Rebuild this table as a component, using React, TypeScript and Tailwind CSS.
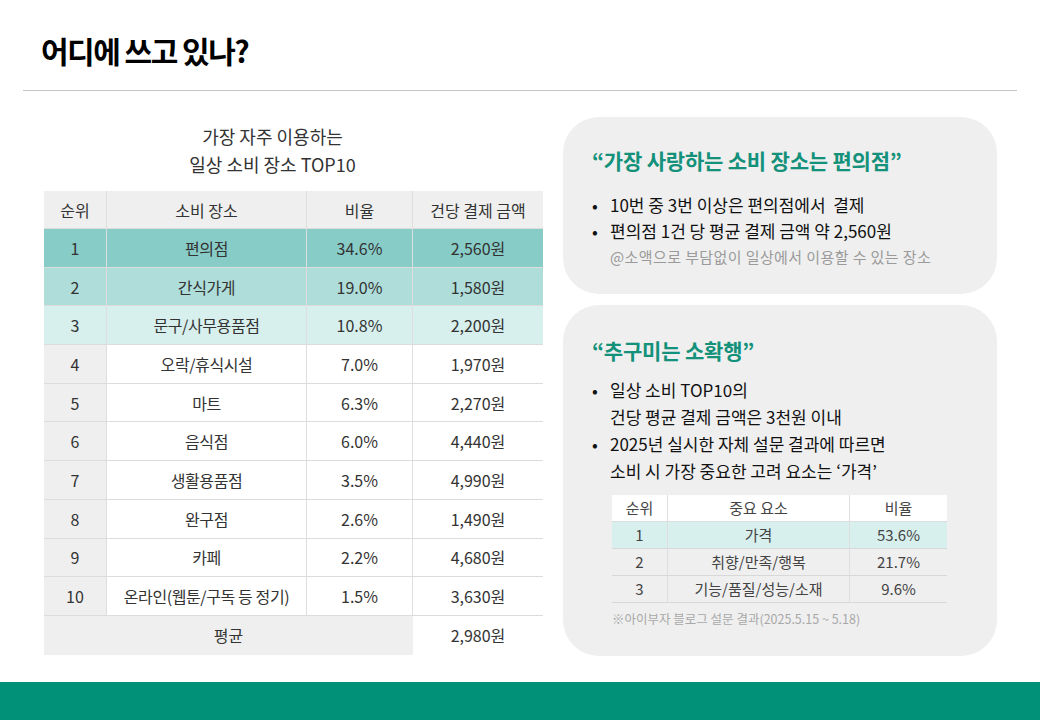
import React from "react";

const font = { fontFamily: '"Noto Sans CJK KR", "Noto Sans", sans-serif' };

const rows = [
  { rank: "1", place: "편의점", ratio: "34.6%", amount: "2,560원", bg: "bg-[#88ccc8]" },
  { rank: "2", place: "간식가게", ratio: "19.0%", amount: "1,580원", bg: "bg-[#aeddda]" },
  { rank: "3", place: "문구/사무용품점", ratio: "10.8%", amount: "2,200원", bg: "bg-[#d7efed]" },
  { rank: "4", place: "오락/휴식시설", ratio: "7.0%", amount: "1,970원" },
  { rank: "5", place: "마트", ratio: "6.3%", amount: "2,270원" },
  { rank: "6", place: "음식점", ratio: "6.0%", amount: "4,440원" },
  { rank: "7", place: "생활용품점", ratio: "3.5%", amount: "4,990원" },
  { rank: "8", place: "완구점", ratio: "2.6%", amount: "1,490원" },
  { rank: "9", place: "카페", ratio: "2.2%", amount: "4,680원" },
  { rank: "10", place: "온라인(웹툰/구독 등 정기)", ratio: "1.5%", amount: "3,630원" },
];

const factors = [
  { rank: "1", name: "가격", ratio: "53.6%", bg: "bg-[#d7efed]" },
  { rank: "2", name: "취향/만족/행복", ratio: "21.7%", bg: "" },
  { rank: "3", name: "기능/품질/성능/소재", ratio: "9.6%", bg: "" },
];

function TopTable() {
  const cols = "grid grid-cols-[63px_200px_106px_130px]";
  const cell = "flex items-center justify-center border-r border-[#dedede] last:border-r-0";
  return (
    <div className="w-[499px] text-[16px] text-[#333]">
      <div className={`${cols} h-[38px] bg-[#efefef] border-b border-[#dcdcdc]`}>
        <div className={cell}>순위</div>
        <div className={cell}>소비 장소</div>
        <div className={cell}>비율</div>
        <div className={cell}>건당 결제 금액</div>
      </div>
      {rows.map((r) => (
        <div key={r.rank} className={`${cols} h-[38.7px] border-b border-[#dcdcdc] ${r.bg ?? "bg-white"}`}>
          <div className={`${cell} ${r.bg ? "" : "bg-[#efefef]"}`}>{r.rank}</div>
          <div className={`${cell} whitespace-nowrap tracking-[-0.4px]`}>{r.place}</div>
          <div className={cell}>{r.ratio}</div>
          <div className={cell}>{r.amount}</div>
        </div>
      ))}
      <div className={`${cols} h-[39px]`}>
        <div className="col-span-3 flex items-center justify-center bg-[#efefef]">평균</div>
        <div className="flex items-center justify-center bg-white">2,980원</div>
      </div>
    </div>
  );
}

function Bullet({ children }: { children: React.ReactNode }) {
  return (
    <div className="flex">
      <span className="w-[18px] shrink-0">•</span>
      <div>{children}</div>
    </div>
  );
}

function FactorTable() {
  const cols = "grid grid-cols-[56px_182px_97px]";
  const cell = "flex items-center justify-center border-r border-[#dedede] last:border-r-0";
  return (
    <div className="w-[335px] text-[15px] text-[#444]">
      <div className={`${cols} h-[27px] bg-white border-b border-[#dcdcdc]`}>
        <div className={cell}>순위</div>
        <div className={cell}>중요 요소</div>
        <div className={cell}>비율</div>
      </div>
      {factors.map((f) => (
        <div key={f.rank} className={`${cols} h-[27px] border-b border-[#d8d8d8] ${f.bg}`}>
          <div className={cell}>{f.rank}</div>
          <div className={cell}>{f.name}</div>
          <div className={cell}>{f.ratio}</div>
        </div>
      ))}
    </div>
  );
}

export default function App() {
  return (
    <div className="w-[1040px] h-[720px] bg-white flex flex-col overflow-hidden" style={font}>
      <div className="px-[23px]">
        <h1 className="pl-[18px] pt-[27px] h-[90px] text-[30px] font-bold tracking-[-1.5px] text-black leading-[46px]">
          어디에 쓰고 있나?
        </h1>
        <div className="h-px bg-[#c4c4c4]" />
      </div>

      <div className="flex flex-1 pl-[44px] pt-[26px]">
        <div className="flex flex-col">
          <div className="pt-[5px] pr-[42px] text-center text-[18px] leading-[28px] text-[#333] h-[74px]">
            <div>가장 자주 이용하는</div>
            <div>일상 소비 장소 TOP10</div>
          </div>
          <TopTable />
        </div>

        <div className="ml-[20px] flex flex-col gap-[11px] w-[434px]">
          <div className="h-[177px] rounded-[36px] bg-[#efefef] px-[29px] pt-[28px] text-[17px] text-[#111]">
            <div className="text-[21px] font-bold text-[#13917a] tracking-[-0.2px] leading-[30px]">
              “가장 사랑하는 소비 장소는 편의점”
            </div>
            <div className="mt-[17px] leading-[26px]">
              <Bullet>10번 중 3번 이상은 편의점에서&nbsp; 결제</Bullet>
              <Bullet>편의점 1건 당 평균 결제 금액 약 2,560원</Bullet>
              <div className="pl-[18px] text-[15px] tracking-[0.4px] text-[#9a9a9a] leading-[26px]">
                @소액으로 부담없이 일상에서 이용할 수 있는 장소
              </div>
            </div>
          </div>

          <div className="h-[351px] rounded-[36px] bg-[#efefef] px-[29px] pt-[30px] text-[17px] text-[#111]">
            <div className="text-[21px] font-bold text-[#13917a] tracking-[-0.2px] leading-[30px]">
              “추구미는 소확행”
            </div>
            <div className="mt-[11px] leading-[27px]">
              <Bullet>
                일상 소비 TOP10의
                <br />
                건당 평균 결제 금액은 3천원 이내
              </Bullet>
              <Bullet>
                2025년 실시한 자체 설문 결과에 따르면
                <br />
                소비 시 가장 중요한 고려 요소는 ‘가격’
              </Bullet>
            </div>
            <div className="mt-[11px] pl-[20px]">
              <FactorTable />
              <div className="mt-[6px] text-[12.5px] text-[#a8a8a8] leading-[20px]">
                ※아이부자 블로그 설문 결과(2025.5.15 ~ 5.18)
              </div>
            </div>
          </div>
        </div>
      </div>

      <div className="h-[38px] bg-[#009178]" />
    </div>
  );
}
